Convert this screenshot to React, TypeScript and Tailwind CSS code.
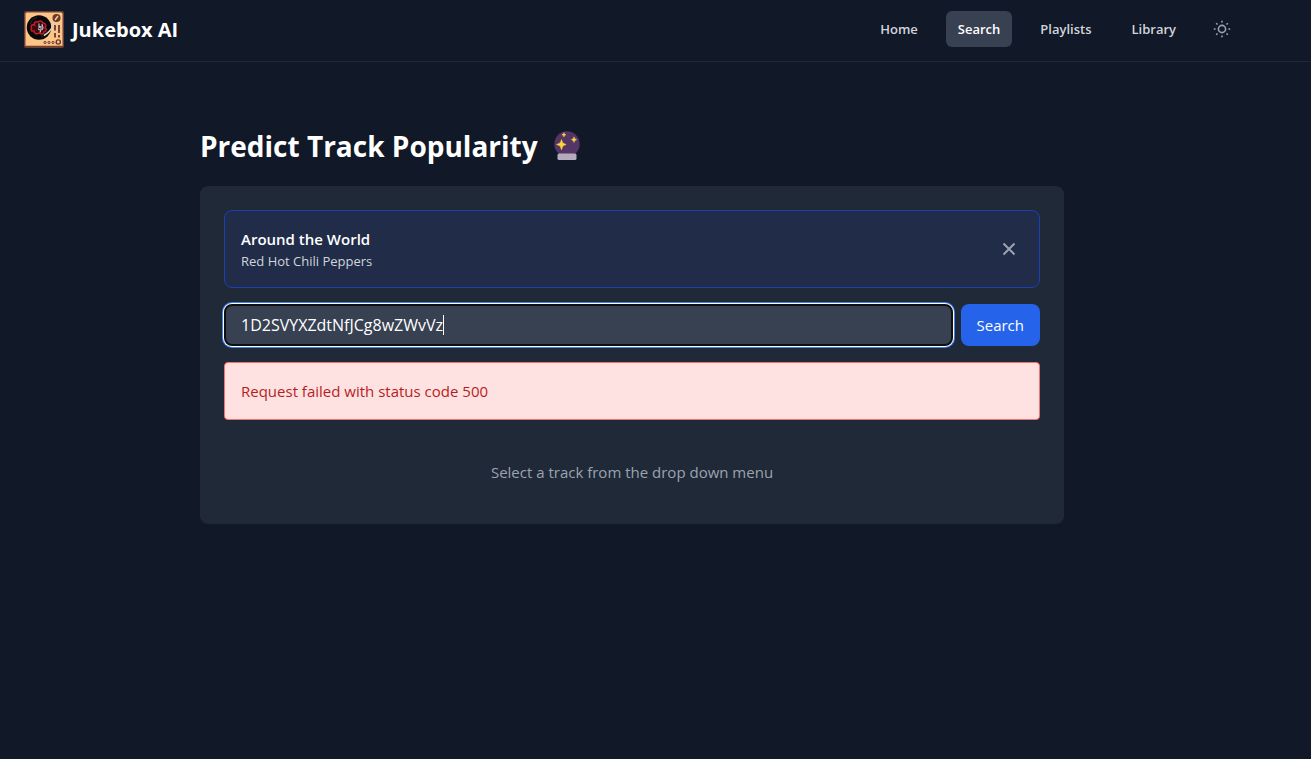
import { useState } from "react";

const navLink =
  "rounded-md px-3 py-2 text-[13px] font-semibold leading-5 text-[#d1d5db] hover:text-white";

function Logo() {
  return (
    <svg viewBox="0 0 40 37" className="h-[37px] w-10" aria-hidden="true">
      <rect width="40" height="37" rx="2" fill="#6f3f31" />
      <rect x="1.5" y="1.5" width="37" height="33.5" rx="1.5" fill="#fdc587" />
      <path d="M1.5 34.500H38.5" stroke="#e59b68" />
      <circle cx="15" cy="16.5" r="12.2" fill="#08080a" />
      <path d="M6 13a10 10 0 0 1 7-7M17 26a10 10 0 0 0 7-6" stroke="#2c2c30" fill="none" />
      <path
        d="M14 11c-3-1-4.500 1-3.500 3-3-1-4 1-3 3-1 2 0 3.500 2.500 3 0 3 3 3.500 5 2 2 2 5 1 5-1 3-1 3-3 1-4 2-3 0-5-2-5-1-2-4-3-5-1Z"
        fill="#3a0c10"
        stroke="#c01c28"
        strokeWidth="1.5"
      />
      <path d="M15 12.500v4l2-1v3l-1 3M18 13l1 4-1 2M14 18l2 1" fill="none" stroke="#c4c4c8" strokeWidth="1.1" />
      <path d="M30 9c0 6-4 12-10 15.500" fill="none" stroke="#d9d0ca" strokeWidth="1.5" />
      <circle cx="32.5" cy="7" r="4" fill="#65392f" />
      <path d="M31 9l3-4" stroke="#fdc587" strokeWidth="1.5" />
      <path d="M31 14v5.500M31 22v4.500M35 14v8M35 24v2.500" stroke="#65392f" strokeWidth="1.8" />
      <g fill="none" stroke="#65392f">
        <circle cx="21" cy="31.5" r="1.1" />
        <circle cx="25" cy="31.5" r="1.1" />
        <circle cx="29" cy="31.5" r="1.1" />
        <circle cx="34.3" cy="31" r="2.1" strokeWidth="1.4" />
      </g>
    </svg>
  );
}

function CrystalBall() {
  return (
    <svg viewBox="0 0 26 30" className="h-[30px] w-[26px]" role="img" aria-label="Crystal ball">
      <circle cx="13" cy="13" r="12.7" fill="#533566" />
      <path d="M5 22.500h16a1.500 1.500 0 0 1 1.500 1.500v3.500a1.500 1.500 0 0 1-1.500 1.500H5a1.500 1.500 0 0 1-1.500-1.500V24A1.500 1.500 0 0 1 5 22.500Z" fill="#b4acbc" />
      <path
        d="M7.500 8.500l1.400 3.400 3.300 1.600-3.300 1.600-1.400 3.800-1.400-3.800-3.600-1.600 3.600-1.600ZM20 5.800l.9 2 1.800.9-1.800.9-.9 2-.9-2-1.800-.9 1.800-.9ZM9.900 1.600l.7 1.500 1.300.7-1.300.7-.7 1.500-.7-1.500-1.300-.7 1.300-.7Z"
        fill="#fcd53f"
        stroke="#fcd53f"
        strokeWidth=".4"
        strokeLinejoin="round"
      />
    </svg>
  );
}

function SunIcon() {
  return (
    <svg viewBox="0 0 20 20" className="size-5" fill="none" stroke="currentColor" strokeWidth="1.6" aria-hidden="true">
      <circle cx="10" cy="10" r="3.6" />
      <path d="M10 1.800v1.800M10 16.400v1.800M1.800 10h1.800M16.400 10h1.800M4.200 4.200l1.300 1.300M14.500 14.500l1.300 1.300M4.200 15.800l1.300-1.300M14.500 5.500l1.300-1.300" />
    </svg>
  );
}

export default function App() {
  const [query, setQuery] = useState("1D2SVYXZdtNfJCg8wZWvVz");
  const [selected, setSelected] = useState(true);

  return (
    <div className="min-h-screen bg-[#111827] font-['Segoe_UI','Open_Sans',sans-serif] text-white">
      <header className="border-b border-[#1f2937] pr-[47px]">
        <div className="flex items-start justify-between px-6 pb-[13px] pt-[11px]">
          <a href="#home" className="flex items-center gap-2 text-xl font-bold leading-7">
            <Logo />
            Jukebox AI
          </a>
          <nav className="flex items-center gap-4">
            <a href="#home" className={navLink}>Home</a>
            <a
              href="#search"
              aria-current="page"
              className="rounded-md bg-[#374151] px-3 py-2 text-[13px] font-semibold leading-5 text-white"
            >
              Search
            </a>
            <a href="#playlists" className={navLink}>Playlists</a>
            <a href="#library" className={navLink}>Library</a>
            <button type="button" aria-label="Toggle theme" className="rounded-md p-2 text-[#9ca3af]">
              <SunIcon />
            </button>
          </nav>
        </div>
      </header>

      <main className="pr-[47px]">
        <div className="mx-auto max-w-4xl px-4 pt-16">
          <h1 className="mb-5 flex items-center gap-4 text-[28px] font-bold leading-10">
            Predict Track Popularity
            <CrystalBall />
          </h1>

          <section className="flex flex-col gap-4 rounded-lg bg-[#1f2937] p-6">
            {selected && (
              <div className="flex items-center justify-between rounded-lg border border-[#1e40af] bg-[#202c48] p-4">
                <div>
                  <h2 className="text-[15px] font-semibold leading-6">Around the World</h2>
                  <p className="text-[13px] leading-5 text-[#d1d5db]">Red Hot Chili Peppers</p>
                </div>
                <button
                  type="button"
                  aria-label="Clear selected track"
                  onClick={() => setSelected(false)}
                  className="p-1 text-[#9ca3af]"
                >
                  <svg viewBox="0 0 20 20" className="size-5" fill="none" stroke="currentColor" strokeWidth="2" aria-hidden="true">
                    <path d="M4.500 4.500l11 11M15.500 4.500l-11 11" />
                  </svg>
                </button>
              </div>
            )}

            <form className="flex gap-2" onSubmit={(e) => e.preventDefault()}>
              <div className="relative flex min-w-0 flex-1">
                <input
                  type="text"
                  aria-label="Track ID"
                  value={query}
                  onChange={(e) => setQuery(e.target.value)}
                  className="w-full rounded-lg border-2 border-[#101010] bg-[#374151] px-[15px] py-[7px] text-base leading-6 text-white caret-transparent shadow-[0_0_0_1px_#ffffff,0_0_0_2px_#3b82f6] outline-none"
                />
                <span
                  aria-hidden="true"
                  className="pointer-events-none absolute inset-y-0 left-[17px] flex items-center text-base leading-6"
                >
                  <span className="invisible whitespace-pre">{query}</span>
                  <span className="h-5 w-px bg-white" />
                </span>
              </div>
              <button type="submit" className="rounded-lg bg-[#2563eb] px-4 py-2 text-[15px] leading-6 text-white">
                Search
              </button>
            </form>

            <div
              role="alert"
              className="rounded-sm border border-[#f87171] bg-[#fee2e2] p-4 text-[15px] leading-6 text-[#b91c1c]"
            >
              Request failed with status code 500
            </div>

            <p className="pb-4 pt-6 text-center text-[15px] leading-6 text-[#9ca3af]">
              Select a track from the drop down menu
            </p>
          </section>
        </div>
      </main>
    </div>
  );
}
